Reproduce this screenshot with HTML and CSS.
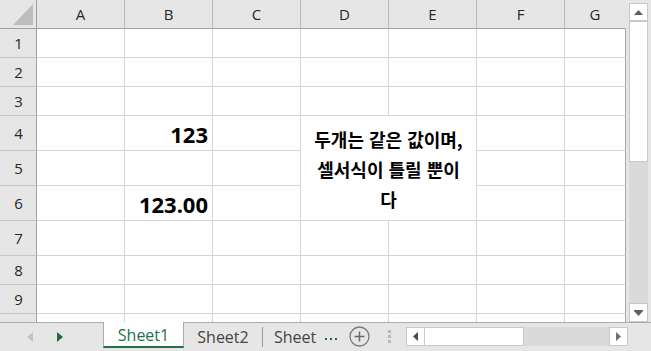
FILE: index.html
```html
<!DOCTYPE html>
<html lang="ko">
<head>
<meta charset="utf-8">
<title>Sheet1</title>
<link rel="stylesheet" href="styles.css">
</head>
<body>
<div class="app">
  <div class="top">
    <div class="sheet">
      <div class="corner"><div class="corner-tri"></div></div>
      <div class="ch">A</div><div class="ch">B</div><div class="ch">C</div><div class="ch">D</div><div class="ch">E</div><div class="ch">F</div><div class="ch last">G</div>

      <div class="rh">1</div><div class="c"></div><div class="c"></div><div class="c"></div><div class="c"></div><div class="c"></div><div class="c"></div><div class="c last"></div>
      <div class="rh">2</div><div class="c"></div><div class="c"></div><div class="c"></div><div class="c"></div><div class="c"></div><div class="c"></div><div class="c last"></div>
      <div class="rh">3</div><div class="c"></div><div class="c"></div><div class="c"></div><div class="c"></div><div class="c"></div><div class="c"></div><div class="c last"></div>
      <div class="rh">4</div><div class="c"></div><div class="c num">123</div><div class="c"></div>
      <div class="c merged">두개는 같은 값이며,<br>셀서식이 틀릴 뿐이<br>다</div>
      <div class="c"></div><div class="c last"></div>
      <div class="rh">5</div><div class="c"></div><div class="c"></div><div class="c"></div><div class="c"></div><div class="c last"></div>
      <div class="rh">6</div><div class="c"></div><div class="c num">123.00</div><div class="c"></div><div class="c"></div><div class="c last"></div>
      <div class="rh">7</div><div class="c"></div><div class="c"></div><div class="c"></div><div class="c"></div><div class="c"></div><div class="c"></div><div class="c last"></div>
      <div class="rh">8</div><div class="c"></div><div class="c"></div><div class="c"></div><div class="c"></div><div class="c"></div><div class="c"></div><div class="c last"></div>
      <div class="rh">9</div><div class="c"></div><div class="c"></div><div class="c"></div><div class="c"></div><div class="c"></div><div class="c"></div><div class="c last"></div>
      <div class="rh cut"></div><div class="c cut"></div><div class="c cut"></div><div class="c cut"></div><div class="c cut"></div><div class="c cut"></div><div class="c cut"></div><div class="c cut last"></div>
    </div>
    <div class="vscroll">
      <div class="sbtn"><svg width="9" height="5" viewBox="0 0 9 5"><path d="M0 5 L4.5 0 L9 5 Z" fill="#606060"/></svg></div>
      <div class="vthumb"></div>
      <div class="vtrack"></div>
      <div class="sbtn down"><svg width="9" height="6" viewBox="0 0 9 6"><path d="M0 0 H9 V1 H0 Z M0 1 L9 1 L4.5 6 Z" fill="#606060"/></svg></div>
    </div>
  </div>
  <div class="tabbar">
    <div class="nav">
      <svg width="6" height="10" viewBox="0 0 6 10"><path d="M6 0 L0 5 L6 10 Z" fill="#c4c4c4"/></svg>
      <svg class="nav-next" width="6" height="10" viewBox="0 0 6 10"><path d="M0 0 L6 5 L0 10 Z" fill="#1e6b3c"/></svg>
    </div>
    <div class="tab active">Sheet1</div>
    <div class="tab second">Sheet2</div>
    <div class="tab-sep"></div>
    <div class="tab third">Sheet</div>
    <div class="more"><span></span><span></span><span></span></div>
    <div class="add"><svg width="21" height="21" viewBox="0 0 21 21"><circle cx="10.5" cy="10.5" r="9.5" fill="none" stroke="#7a7a7a" stroke-width="1.3"/><path d="M10.5 5.5 V15.5 M5.5 10.5 H15.5" stroke="#6a6a6a" stroke-width="1.5"/></svg></div>
    <div class="grip"><span></span><span></span><span></span></div>
    <div class="hscroll">
      <div class="hbtn"><svg width="5" height="9" viewBox="0 0 5 9"><path d="M5 0 L0 4.5 L5 9 Z" fill="#4a4a4a"/></svg></div>
      <div class="hthumb"></div>
      <div class="htrack"></div>
      <div class="hbtn"><svg width="5" height="9" viewBox="0 0 5 9"><path d="M0 0 L5 4.5 L0 9 Z" fill="#6f6f6f"/></svg></div>
    </div>
  </div>
</div>
</body>
</html>
```
FILE: styles.css
```css
* { box-sizing: border-box; }
html, body { margin: 0; padding: 0; }
body {
  width: 651px;
  height: 351px;
  overflow: hidden;
  background: #e6e6e6;
  font-family: "Open Sans", "Noto Sans", sans-serif;
}
.app { display: flex; flex-direction: column; width: 651px; height: 351px; }
.top { display: flex; height: 322px; }

.sheet {
  display: grid;
  grid-template-columns: 37px repeat(6, 88px) 61px;
  grid-template-rows: 29px 29px 29px 29px 35px 35px 35px 35px 29px 29px 8px;
  background: #fff;
  width: 626px;
}
.c {
  border-right: 1px solid #d4d4d4;
  border-bottom: 1px solid #d4d4d4;
  background: #fff;
}
.c.last { border-right-color: #a8a8a8; }
.c.cut { border-bottom: none; }

.corner {
  background: #e6e6e6;
  border-right: 1px solid #a0a0a0;
  border-bottom: 1px solid #a0a0a0;
  display: flex;
  justify-content: flex-end;
  align-items: flex-end;
  padding: 0 3px 3px 0;
}
.corner-tri {
  width: 20px;
  height: 21px;
  background: #bdbdbd;
  clip-path: polygon(100% 0, 100% 100%, 0 100%);
}
.ch {
  background: #e6e6e6;
  border-right: 1px solid #b9b9b9;
  border-bottom: 1px solid #a0a0a0;
  display: flex;
  align-items: center;
  justify-content: center;
  font-size: 15px;
  color: #262626;
  padding-bottom: 1px;
}
.ch.last { border-right-color: #e6e6e6; }
.rh {
  background: #e6e6e6;
  border-right: 1px solid #a0a0a0;
  border-bottom: 1px solid #c6c6c6;
  display: flex;
  align-items: center;
  justify-content: center;
  font-size: 15px;
  color: #262626;
  padding-left: 1px;
}
.rh.cut { border-bottom: none; }

.num {
  display: flex;
  align-items: center;
  justify-content: flex-end;
  padding-right: 4px;
  padding-top: 2px;
  font-family: "Noto Sans", "Open Sans", sans-serif;
  font-weight: 700;
  font-size: 22px;
  color: #000;
}
.merged {
  grid-column: 5 / 7;
  grid-row: 5 / 8;
  display: flex;
  align-items: center;
  justify-content: center;
  text-align: center;
  font-family: "Noto Sans CJK KR", "Noto Sans", sans-serif;
  font-weight: 700;
  font-size: 18px;
  line-height: 30px;
  color: #000;
  padding-top: 1px;
}

.vscroll {
  width: 25px;
  display: flex;
  flex-direction: column;
  padding: 3px 3px 0 3px;
  background: #e6e6e6;
}
.sbtn {
  height: 18px;
  background: #fff;
  border: 1px solid #c8c8c8;
  display: flex;
  align-items: center;
  justify-content: center;
}
.sbtn.down { height: 19px; }
.vthumb { height: 141px; background: #fff; border: 1px solid #c8c8c8; }
.vtrack { flex: 1; background: #dadada; }

.tabbar {
  height: 29px;
  border-top: 1px solid #ababab;
  display: flex;
  align-items: flex-start;
  font-size: 16px;
  color: #444;
}
.nav {
  width: 103px;
  height: 28px;
  display: flex;
  align-items: center;
  padding-left: 27px;
}
.nav-next { margin-left: 24px; }
.tab {
  height: 28px;
  display: flex;
  align-items: center;
  justify-content: center;
  padding-bottom: 1px;
}
.tab.active {
  width: 81px;
  height: 26px;
  margin-top: -1px;
  background: #fff;
  border-left: 1px solid #ababab;
  border-right: 1px solid #ababab;
  border-bottom: 2px solid #217346;
  color: #217346;
  padding-bottom: 0;
  padding-top: 1px;
}
.tab.second { width: 78px; }
.tab-sep { width: 1px; height: 20px; margin-top: 4px; background: #9a9a9a; }
.tab.third { width: 62px; justify-content: flex-start; padding-left: 11px; }
.more {
  height: 28px;
  display: flex;
  align-items: center;
  gap: 3px;
  padding-top: 3px;
}
.more span { width: 2px; height: 2px; background: #1e6b3c; }
.add {
  width: 21px;
  height: 21px;
  margin-top: 3px;
  margin-left: 12px;
}
.add svg { display: block; }
.grip {
  margin-left: 18px;
  margin-top: 7px;
  display: flex;
  flex-direction: column;
  gap: 2px;
}
.grip span { width: 3px; height: 3px; background: #b8b8b8; }
.hscroll {
  margin-left: 15px;
  margin-top: 4px;
  display: flex;
  height: 19px;
}
.hbtn {
  width: 19px;
  height: 19px;
  background: #fff;
  border: 1px solid #c8c8c8;
  display: flex;
  align-items: center;
  justify-content: center;
}
.hthumb { width: 99px; background: #fff; border: 1px solid #c8c8c8; border-left: none; }
.htrack { width: 85px; background: #dadada; }
```
